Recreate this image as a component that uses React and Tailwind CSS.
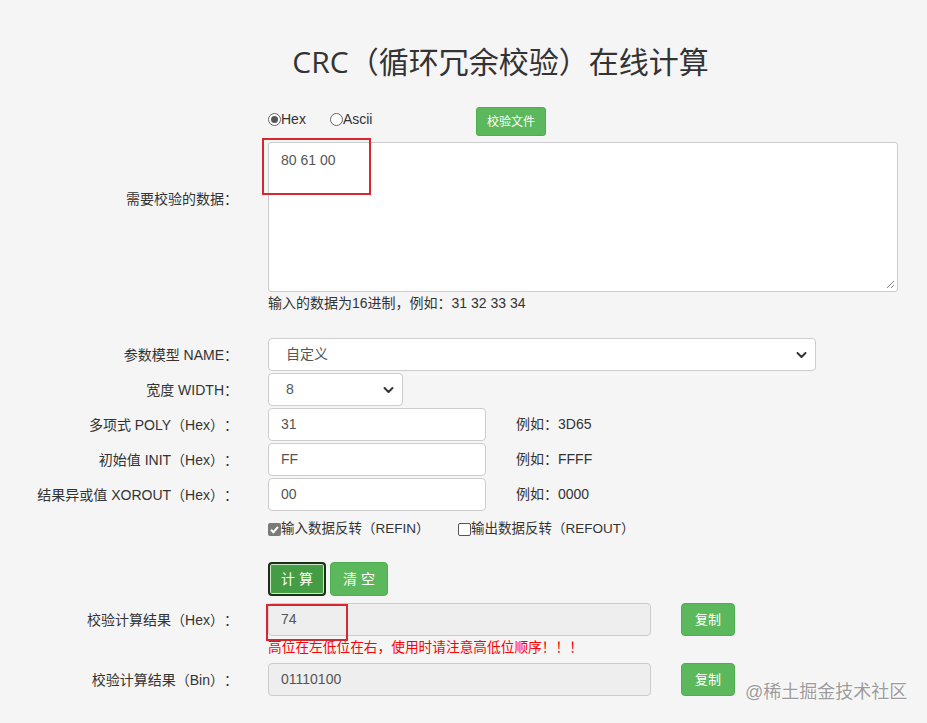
import React from "react";

const FONT = { fontFamily: '"Liberation Sans", "Noto Sans CJK SC", sans-serif', textSpacingTrim: "space-all" };

function Chevron() {
  return (
    <svg width="11" height="8" viewBox="0 0 11 8" className="shrink-0">
      <path d="M1.5 2 L5.5 6 L9.5 2" fill="none" stroke="#333" strokeWidth="2" strokeLinecap="round" strokeLinejoin="round" />
    </svg>
  );
}

function Radio({ checked, label }) {
  return (
    <span className="flex items-center">
      <span className="w-[13px] h-[13px] rounded-full border border-[#666] bg-white flex items-center justify-center">
        {checked && <span className="w-[7px] h-[7px] rounded-full bg-[#555]" />}
      </span>
      <span className="text-[14px] text-[#333] leading-[18px]">{label}</span>
    </span>
  );
}

function Checkbox({ checked, label }) {
  return (
    <span className="flex items-center">
      {checked ? (
        <span className="w-[13px] h-[13px] rounded-[2px] bg-[#7a7a7a] flex items-center justify-center">
          <svg width="11" height="11" viewBox="0 0 11 11">
            <path d="M2 5.8 L4.4 8.2 L9 2.8" fill="none" stroke="#fff" strokeWidth="2" />
          </svg>
        </span>
      ) : (
        <span className="w-[13px] h-[13px] rounded-[2px] border border-[#555] bg-white" />
      )}
      <span className="text-[13.5px] text-[#333] leading-[18px]">{label}</span>
    </span>
  );
}

function Label({ children, className = "" }) {
  return (
    <div className={"w-[268px] shrink-0 pr-[30px] text-right text-[14px] leading-[18px] text-[#333] " + className}>
      {children}
    </div>
  );
}

function Input({ value, w, gray }) {
  return (
    <div
      className={
        "h-[33px] rounded-[4px] border border-[#ccc] px-[12px] flex items-center text-[14px] text-[#555] " +
        (gray ? "bg-[#eeeeee]" : "bg-white")
      }
      style={{ width: w }}
    >
      {value}
    </div>
  );
}

function Select({ value, w }) {
  return (
    <div
      className="h-[33px] rounded-[4px] border border-[#ccc] bg-white pl-[17px] pr-[8px] flex items-center justify-between text-[14px] text-[#555]"
      style={{ width: w }}
    >
      <span>{value}</span>
      <Chevron />
    </div>
  );
}

export default function App() {
  return (
    <div className="relative min-h-[723px] w-full bg-[#f5f5f5] overflow-hidden" style={FONT}>
      <h1
        className="pl-[74px] pt-[45px] text-center text-[30px] leading-[33px] text-[#333]"
        style={{ fontFamily: '"Open Sans", "Noto Sans CJK SC", sans-serif' }}
      >
        CRC（循环冗余校验）在线计算
      </h1>

      {/* radio row */}
      <div className="flex mt-[29px]">
        <Label />
        <div className="flex items-start h-[29px]">
          <div className="pt-[3px] flex w-[208px]">
            <Radio checked label="Hex" />
            <span className="ml-[24px]">
              <Radio label="Ascii" />
            </span>
          </div>
          <button className="h-[29px] w-[70px] rounded-[3px] bg-[#5cb85c] border border-[#4cae4c] text-white text-[12px]">
            校验文件
          </button>
        </div>
      </div>

      {/* textarea */}
      <div className="flex mt-[6px]">
        <Label className="pt-[48px]">需要校验的数据：</Label>
        <div className="flex flex-col">
          <div className="relative w-[630px] h-[150px] rounded-[3px] border border-[#ccc] bg-white px-[12px] pt-[7px] text-[14px] text-[#555] leading-[20px]">
            80 61 00
            <svg width="9" height="9" viewBox="0 0 9 9" className="absolute right-[2px] bottom-[2px]">
              <path d="M8 1 L1 8 M8 5 L5 8" stroke="#888" strokeWidth="1" />
            </svg>
          </div>
          <div className="mt-[2px] text-[14px] leading-[18px] text-[#333]">输入的数据为16进制，例如：31 32 33 34</div>
        </div>
      </div>

      <div className="flex items-center mt-[26px]">
        <Label>参数模型 NAME：</Label>
        <Select value="自定义" w={548} />
      </div>
      <div className="flex items-center mt-[2px]">
        <Label>宽度 WIDTH：</Label>
        <Select value="8" w={135} />
      </div>
      <div className="flex items-center mt-[2px]">
        <Label>多项式 POLY（Hex）：</Label>
        <Input value="31" w={218} />
        <span className="ml-[30px] text-[14px] text-[#333]">例如：3D65</span>
      </div>
      <div className="flex items-center mt-[2px]">
        <Label>初始值 INIT（Hex）：</Label>
        <Input value="FF" w={218} />
        <span className="ml-[30px] text-[14px] text-[#333]">例如：FFFF</span>
      </div>
      <div className="flex items-center mt-[2px]">
        <Label>结果异或值 XOROUT（Hex）：</Label>
        <Input value="00" w={218} />
        <span className="ml-[30px] text-[14px] text-[#333]">例如：0000</span>
      </div>

      <div className="flex items-center mt-[9px] h-[18px]">
        <Label />
        <div className="w-[190px]">
          <Checkbox checked label="输入数据反转（REFIN）" />
        </div>
        <Checkbox label="输出数据反转（REFOUT）" />
      </div>

      <div className="flex items-center mt-[24px]">
        <Label />
        <button className="h-[34px] w-[58px] rounded-[4px] bg-[#449d44] border-2 border-[#173117] shadow-[inset_0_0_0_1px_#cfe6cf] text-white text-[14px]">
          计 算
        </button>
        <button className="ml-[4px] h-[34px] w-[58px] rounded-[4px] bg-[#5cb85c] border border-[#4cae4c] text-white text-[14px]">
          清 空
        </button>
      </div>

      <div className="flex items-center mt-[7px]">
        <Label>校验计算结果（Hex）：</Label>
        <Input value="74" w={383} gray />
        <button className="ml-[30px] h-[33px] w-[54px] rounded-[4px] bg-[#5cb85c] border border-[#4cae4c] text-white text-[13px]">
          复制
        </button>
      </div>
      <div className="flex mt-[3px]">
        <Label />
        <div className="text-[13.7px] leading-[18px] text-[#f00]">高位在左低位在右，使用时请注意高低位顺序！！！</div>
      </div>
      <div className="flex items-center mt-[6px]">
        <Label>校验计算结果（Bin）：</Label>
        <Input value="01110100" w={383} gray />
        <button className="ml-[30px] h-[33px] w-[54px] rounded-[4px] bg-[#5cb85c] border border-[#4cae4c] text-white text-[13px]">
          复制
        </button>
      </div>

      {/* annotation boxes */}
      <div className="absolute left-[262px] top-[138px] w-[109px] h-[57px] border-2 border-[#d7282f]" />
      <div className="absolute left-[266px] top-[604px] w-[82px] h-[37px] border-2 border-[#d7282f]" />

      {/* watermark */}
      <div
        className="absolute left-[745px] top-[681px] text-[18px] leading-[22px] text-[#9c9c9c]"
        style={{ textShadow: "0 0 2px #fff, 0 0 2px #fff" }}
      >
        @稀土掘金技术社区
      </div>
    </div>
  );
}
